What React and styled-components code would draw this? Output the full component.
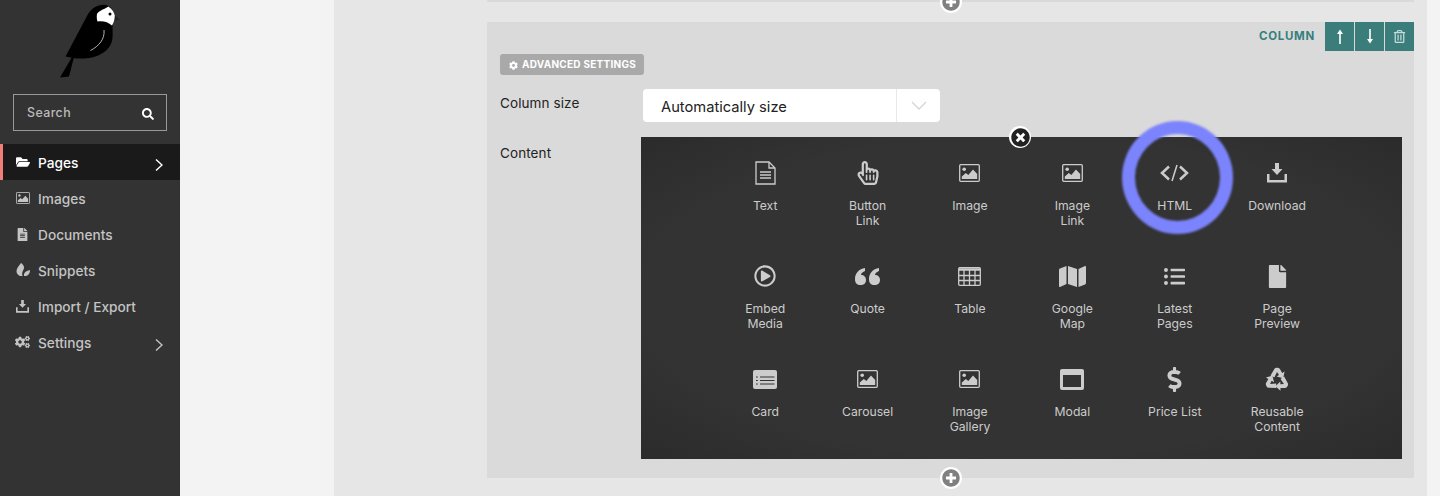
import styled, { createGlobalStyle } from "styled-components";
import {
  FaFolderOpen, FaFileAlt, FaCogs, FaSearch, FaCog, FaPlusCircle, FaTimesCircle, FaRegHandPointer,
  FaRegPlayCircle, FaMap, FaListUl, FaFile, FaDollarSign, FaRegTrashAlt,
} from "react-icons/fa";

const Global = createGlobalStyle`
  html, body { margin: 0; padding: 0; height: 100%; overflow: hidden; }
  body { font-family: Inter, "Liberation Sans", sans-serif; -webkit-font-smoothing: antialiased; }
  * { box-sizing: border-box; }
`;

const Shell = styled.div`
  display: flex;
  width: 1440px;
  height: 496px;
  overflow: hidden;
  background: #f3f3f3;
`;

const Sidebar = styled.aside`
  width: 180px;
  flex-shrink: 0;
  background: #333;
`;

const LogoWrap = styled.div`
  height: 94px;
  display: flex;
  justify-content: center;
`;

const SearchBox = styled.div`
  display: flex;
  align-items: center;
  justify-content: space-between;
  height: 37px;
  margin: 0 13px 13px;
  padding: 0 12px 0 13px;
  border: 1px solid #999;
  color: #bbb;
  font-size: 12.4px;
  font-weight: 500;
  letter-spacing: 0.4px;
  svg { color: #fff; margin-top: 2px; }
`;

const NavItem = styled.div`
  display: flex;
  align-items: center;
  height: 36px;
  padding-left: ${(p) => (p.$active ? "12px" : "15px")};
  border-left: ${(p) => (p.$active ? "3px solid #f37e77" : "none")};
  background: ${(p) => (p.$active ? "#1a1a1a" : "transparent")};
  color: ${(p) => (p.$active ? "#fff" : "#c4c4c4")};
  font-size: 13.7px;
  font-weight: 500;
`;

const NavIcon = styled.span`
  display: flex;
  justify-content: center;
  width: 15px;
  margin-right: 8px;
`;

const NavLabel = styled.span`
  flex: 1;
  padding-top: 2px;
`;

const NavChevron = styled.svg`
  width: 8px;
  height: 12px;
  margin-right: 17px;
  margin-top: 6px;
`;

const Editor = styled.main`
  width: 1093px;
  margin-left: 154px;
  background: #e6e6e6;
  padding-left: 153px;
  padding-right: 13px;
`;

const PrevBlock = styled.div`
  position: relative;
  height: 2px;
  margin-bottom: 20px;
  background: #dadada;
`;

const Block = styled.section`
  position: relative;
  height: 456px;
  padding: 0 12px 19px 13px;
  background: #dadada;
`;

const AddButton = styled.span`
  position: absolute;
  left: 453px;
  bottom: -11px;
  width: 22px;
  height: 22px;
  border-radius: 50%;
  background: #fff;
  display: flex;
  align-items: center;
  justify-content: center;
  color: #808080;
  z-index: 2;
`;

const BlockHeader = styled.div`
  display: flex;
  justify-content: flex-end;
  align-items: center;
  height: 29px;
  margin-right: -12px;
`;

const BlockTitle = styled.span`
  margin-right: 10px;
  margin-top: -1px;
  color: #35807e;
  font-size: 11.5px;
  font-weight: 700;
  letter-spacing: 0.7px;
`;

const HeaderButton = styled.span`
  display: flex;
  align-items: center;
  justify-content: center;
  width: 29px;
  height: 29px;
  margin-left: ${(p) => (p.$first ? 0 : "1px")};
  background: #3a7d7b;
  color: ${(p) => (p.$muted ? "#c5dedd" : "#fff")};
`;

const AdvancedBadge = styled.div`
  display: inline-flex;
  align-items: center;
  gap: 4px;
  height: 21px;
  margin-top: 3px;
  padding: 0 8px 2px 9px;
  border-radius: 3px;
  background: #a9a9a9;
  color: #fff;
  font-size: 10px;
  font-weight: 700;
  letter-spacing: 0.26px;
  svg { margin-top: 4px; }
`;

const FieldRow = styled.div`
  display: grid;
  grid-template-columns: 141px 1fr;
  margin-top: ${(p) => p.$top}px;
`;

const FieldLabel = styled.label`
  color: #222;
  font-size: 13.5px;
  line-height: 18px;
  padding-top: ${(p) => p.$top}px;
  letter-spacing: 0.1px;
`;

const Select = styled.div`
  display: flex;
  align-items: center;
  width: 297px;
  height: 33px;
  margin-left: 2px;
  border-radius: 4px;
  background: #fff;
  color: #222;
  font-size: 14.7px;
`;

const SelectValue = styled.span`
  flex: 1;
  padding: 2px 0 0 18px;
`;

const SelectArrow = styled.span`
  display: flex;
  align-items: center;
  justify-content: center;
  width: 44px;
  height: 100%;
  border-left: 1px solid #e8e8e8;
  color: #d4d4d4;
`;

const Chooser = styled.div`
  position: relative;
  height: 322px;
`;

const CloseButton = styled.span`
  position: absolute;
  left: 368px;
  top: -11px;
  width: 22px;
  height: 22px;
  border-radius: 50%;
  background: #fff;
  display: flex;
  align-items: center;
  justify-content: center;
  color: #222;
`;

const Panel = styled.div`
  display: grid;
  grid-template-columns: repeat(6, 102.4px);
  grid-template-rows: 103px 103px 1fr;
  height: 100%;
  padding: 22px 0 0 73px;
  background: radial-gradient(ellipse at center, #333 70%, #2b2b2b 100%);
`;

const Tile = styled.div`
  display: flex;
  flex-direction: column;
  align-items: center;
  color: #ccc;
`;

const TileIcon = styled.span`
  display: flex;
  align-items: center;
  justify-content: center;
  height: 28px;
  margin-bottom: 11px;
`;

const TileLabel = styled.span`
  font-size: 12.2px;
  line-height: 15px;
  text-align: center;
  white-space: pre-line;
`;

const Ring = styled.span`
  position: absolute;
  left: 481px;
  top: -16px;
  width: 111px;
  height: 113px;
  border: 13px solid #7c84fd;
  border-radius: 50%;
  filter: blur(1px);
  pointer-events: none;
`;

const Logo = () => (
  <svg width="180" height="94" viewBox="0 0 180 94">
    <path d="M72 57 L60 77.500 L69 76.500 L74 57 Z" fill="#000" />
    <path d="M113 14 L119.500 19.500 L112 21 Z" fill="#222" />
    <path d="M65.500 56.500 L87 16 C91 8 97 4.700 104 4.700 C110 5 113 9 114 15 L113 21 C112 26 113 32 112.500 38 C111.500 50 99 58 84 58.500 C77 58.800 71 58 65.500 56.500 Z" fill="#000" />
    <path d="M97 14 C99 10.500 104 9.500 108.500 6.500 C110.500 8 114 11 114.800 15.500 C114.800 20 113.500 23 112 25.500 C108 22 103 20.500 97.500 21.500 C96.800 19 96.500 16.500 97 14 Z" fill="#fff" />
    <circle cx="110" cy="14" r="1.500" fill="#000" />
    <path d="M104 30 C105 39 99 46 90.500 50.500" fill="none" stroke="#ddd" strokeWidth="0.800" />
  </svg>
);

const DownloadIcon = ({ size }) => (
  <svg width={size} height={size} viewBox="0 0 20 20" fill="currentColor">
    <path d="M8 0 H12 V6 H15.500 L10 12 L4.500 6 H8 Z" />
    <path d="M0 11 H2.500 V17 H17.500 V11 H20 V19.500 H0 Z" />
  </svg>
);

const LeafIcon = () => (
  <svg width="14" height="14" viewBox="0 0 14 14" fill="currentColor">
    <path d="M5 0 C8 2 9 5 7 7.500 C6 9.500 6 11 6.500 13 C3 13.500 0.500 11 0.500 8 C0.500 5 3 3 5 0 Z" />
    <path d="M14 7 C14 11 11.500 13.500 8 13 C7.500 10 9.500 8 14 7 Z" />
  </svg>
);

const ImageIcon = ({ width = 21 }) => (
  <svg width={width} viewBox="0 0 21 18" fill="currentColor">
    <rect x="0.700" y="0.700" width="19.600" height="16.600" rx="1" fill="none" stroke="currentColor" strokeWidth="1.300" />
    <circle cx="5.200" cy="5.200" r="1.800" />
    <path d="M2.800 15 V12.500 L6.800 9 L9.300 11 L14 5.500 L18.200 10 V15 Z" />
  </svg>
);

const TextIcon = () => (
  <svg width="21" height="24" viewBox="0 0 21 24" fill="none" stroke="currentColor" strokeWidth="1.300">
    <path d="M1 1 H14 L20 7 V23 H1 Z" />
    <path d="M14 1 V7 H20" />
    <path d="M5 11 H16 M5 14 H16 M5 17 H16" strokeWidth="1.400" />
  </svg>
);

const CodeIcon = () => (
  <svg width="29" height="22" viewBox="0 0 29 22" fill="none" stroke="currentColor">
    <path d="M9 4.500 L2 11 L9 17.500 M20 4.500 L27 11 L20 17.500" strokeWidth="2.500" />
    <path d="M17 3 L12 19" strokeWidth="1.500" />
  </svg>
);

const quoteMark = "M0 11 C0 5 4 1 10 0 V3 C7 4 6 6 6 7 C9 7 11 9 11 12 C11 15 9 17 5.500 17 C2 17 0 15 0 11 Z";

const QuoteIcon = () => (
  <svg width="25" height="17" viewBox="0 0 25 17" fill="currentColor">
    <path d={quoteMark} />
    <path d={quoteMark} transform="translate(14 0)" />
  </svg>
);

const TableIcon = () => (
  <svg width="23" height="19" viewBox="0 0 23 19" fill="none" stroke="currentColor" strokeWidth="1.300">
    <rect x="0.700" y="0.700" width="21.600" height="17.600" rx="1" />
    <path d="M0.700 2.500 H22.300" strokeWidth="2.500" />
    <path d="M0.700 8.500 H22.300 M0.700 13.500 H22.300 M6 3 V18 M11.500 3 V18 M17 3 V18" />
  </svg>
);

const CardIcon = () => (
  <svg width="24" height="19" viewBox="0 0 24 19">
    <rect width="24" height="19" rx="2" fill="currentColor" />
    <path d="M7 7 H21.500 M7 10.500 H21.500 M7 14 H21.500 M3 7 H4.800 M3 10.500 H4.800 M3 14 H4.800" stroke="#333" strokeWidth="1.200" />
  </svg>
);

const ModalIcon = () => (
  <svg width="24" height="21" viewBox="0 0 24 21">
    <rect width="24" height="21" rx="2" fill="currentColor" />
    <rect x="3" y="6" width="18" height="12" fill="#333" />
  </svg>
);

const recycleArrow = "M5.500 8.500 L9.500 1.800 C10.500 0.500 13.500 0.500 14.800 1.800 L17.200 6 L19.600 4.600 L18.200 11.200 L11.600 9.400 L14 8 L12 5 L9.300 10.500 Z";

const RecycleIcon = () => (
  <svg width="24" height="24" viewBox="0 0 24 24" fill="currentColor">
    <path d={recycleArrow} />
    <path d={recycleArrow} transform="rotate(120 12 13)" />
    <path d={recycleArrow} transform="rotate(240 12 13)" />
  </svg>
);

const ArrowIcon = ({ down }) => (
  <svg width="8" height="15" viewBox="0 0 8 15" fill="currentColor" transform={down ? "rotate(180)" : undefined}>
    <path d="M3.200 15 V5 H1 L4 0.500 L7 5 H4.800 V15 Z" />
  </svg>
);

const SelectChevron = () => (
  <svg width="16" height="9" viewBox="0 0 16 9" fill="none" stroke="currentColor" strokeWidth="1.300">
    <path d="M1 1 L8 8 L15 1" />
  </svg>
);

const Chevron = ({ color }) => (
  <NavChevron viewBox="0 0 8 12" fill="none" stroke={color} strokeWidth="1.400">
    <path d="M1 0.500 L7 6 L1 11.500" />
  </NavChevron>
);

const navItems = [
  { label: "Pages", icon: <FaFolderOpen size={14} />, active: true, more: true },
  { label: "Images", icon: <ImageIcon width={14} /> },
  { label: "Documents", icon: <FaFileAlt size={13} /> },
  { label: "Snippets", icon: <LeafIcon /> },
  { label: "Import / Export", icon: <DownloadIcon size={13} /> },
  { label: "Settings", icon: <FaCogs size={16} />, more: true },
];

const tiles = [
  { label: "Text", icon: <TextIcon /> },
  { label: "Button\nLink", icon: <FaRegHandPointer size={24} /> },
  { label: "Image", icon: <ImageIcon /> },
  { label: "Image\nLink", icon: <ImageIcon /> },
  { label: "HTML", icon: <CodeIcon /> },
  { label: "Download", icon: <DownloadIcon size={20} /> },
  { label: "Embed\nMedia", icon: <FaRegPlayCircle size={22} /> },
  { label: "Quote", icon: <QuoteIcon /> },
  { label: "Table", icon: <TableIcon /> },
  { label: "Google\nMap", icon: <FaMap size={27} /> },
  { label: "Latest\nPages", icon: <FaListUl size={21} /> },
  { label: "Page\nPreview", icon: <FaFile size={23} /> },
  { label: "Card", icon: <CardIcon /> },
  { label: "Carousel", icon: <ImageIcon /> },
  { label: "Image\nGallery", icon: <ImageIcon /> },
  { label: "Modal", icon: <ModalIcon /> },
  { label: "Price List", icon: <FaDollarSign size={25} /> },
  { label: "Reusable\nContent", icon: <RecycleIcon /> },
];

export default function App() {
  return (
    <>
      <Global />
      <Shell>
        <Sidebar>
          <LogoWrap>
            <Logo />
          </LogoWrap>
          <SearchBox>
            <span>Search</span>
            <FaSearch size={12} />
          </SearchBox>
          {navItems.map((item) => (
            <NavItem key={item.label} $active={item.active}>
              <NavIcon>{item.icon}</NavIcon>
              <NavLabel>{item.label}</NavLabel>
              {item.more && <Chevron color={item.active ? "#fff" : "#c4c4c4"} />}
            </NavItem>
          ))}
        </Sidebar>
        <Editor>
          <PrevBlock>
            <AddButton>
              <FaPlusCircle size={18} />
            </AddButton>
          </PrevBlock>
          <Block>
            <BlockHeader>
              <BlockTitle>COLUMN</BlockTitle>
              <HeaderButton $first>
                <ArrowIcon />
              </HeaderButton>
              <HeaderButton>
                <ArrowIcon down />
              </HeaderButton>
              <HeaderButton $muted>
                <FaRegTrashAlt size={13} />
              </HeaderButton>
            </BlockHeader>
            <AdvancedBadge>
              <FaCog size={9} />
              ADVANCED SETTINGS
            </AdvancedBadge>
            <FieldRow $top={14}>
              <FieldLabel $top={5}>Column size</FieldLabel>
              <Select>
                <SelectValue>Automatically size</SelectValue>
                <SelectArrow>
                  <SelectChevron />
                </SelectArrow>
              </Select>
            </FieldRow>
            <FieldRow $top={15}>
              <FieldLabel $top={7}>Content</FieldLabel>
              <Chooser>
                <Panel>
                  {tiles.map((tile) => (
                    <Tile key={tile.label}>
                      <TileIcon>{tile.icon}</TileIcon>
                      <TileLabel>{tile.label}</TileLabel>
                    </Tile>
                  ))}
                </Panel>
                <CloseButton>
                  <FaTimesCircle size={19} />
                </CloseButton>
                <Ring />
              </Chooser>
            </FieldRow>
            <AddButton>
              <FaPlusCircle size={18} />
            </AddButton>
          </Block>
        </Editor>
      </Shell>
    </>
  );
}
